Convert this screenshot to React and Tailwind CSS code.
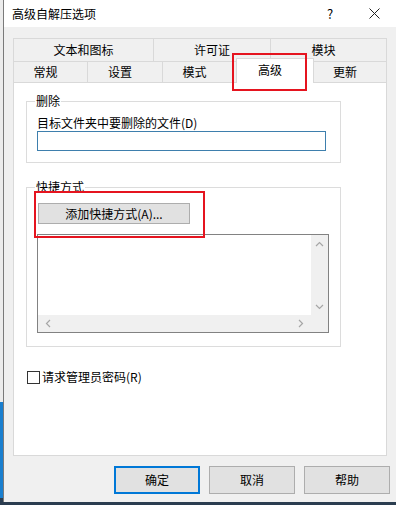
import React from "react";

function Chevron({ dir }) {
  const paths = {
    up: "M1 5 L4.5 1.5 L8 5",
    down: "M1 2 L4.5 5.5 L8 2",
    left: "M5 1 L1.5 4.5 L5 8",
    right: "M2 1 L5.5 4.5 L2 8",
  };
  const horiz = dir === "left" || dir === "right";
  return (
    <svg width={horiz ? 7 : 9} height={horiz ? 9 : 7} viewBox={horiz ? "0 0 7 9" : "0 0 9 7"}>
      <path d={paths[dir]} fill="none" stroke="#a6a6a6" strokeWidth="1.2" />
    </svg>
  );
}

function Group({ label, className, children }) {
  return (
    <div className={"relative border border-[#dcdcdc] " + className}>
      <div className="absolute left-[8px] top-[-8px] bg-white px-[1px] leading-[14px]">{label}</div>
      {children}
    </div>
  );
}

export default function App() {
  return (
    <div className="relative w-[396px] h-[505px] flex flex-col overflow-hidden text-[12px] text-black font-['Noto_Sans_CJK_SC','Microsoft_YaHei',sans-serif]">
      <div className="flex flex-1 min-h-0">
        <div className="w-[3px] flex flex-col">
          <div className="h-[402px] bg-[#ececec]" />
          <div className="h-[96px] bg-[#1a7fcf]" />
          <div className="flex-1 bg-[#2b3d50]" />
        </div>
        <div className="flex-1 border-l border-[#7a7a7a] bg-[#f0f0f0] flex flex-col">
          {/* Title bar */}
          <div className="h-[27px] bg-white flex items-center">
            <div className="pl-[8px] leading-[14px]">高级自解压选项</div>
            <div className="ml-auto flex items-center h-full">
              <div className="w-[46px] text-center text-[13px] leading-[14px]">?</div>
              <div className="w-[43px] flex items-center justify-center">
                <svg width="11" height="11" viewBox="0 0 11 11">
                  <path d="M0.5 0.5 L10.5 10.5 M10.5 0.5 L0.5 10.5" stroke="#222" strokeWidth="1" fill="none" />
                </svg>
              </div>
            </div>
          </div>

          {/* Tabs */}
          <div className="ml-[9px] mt-[11px] w-[374px]">
            <div className="flex h-[23px]">
              <div className="w-[140px] border-t border-l border-[#d9d9d9] flex items-center justify-center leading-[14px]">文本和图标</div>
              <div className="w-[117px] border-t border-l border-[#d9d9d9] flex items-center justify-center leading-[14px]">许可证</div>
              <div className="w-[117px] border-t border-l border-r border-[#d9d9d9] flex items-center justify-center pr-[10px] leading-[14px]">模块</div>
            </div>
            <div className="flex h-[21px] items-start">
              <div className="w-[74px] h-[21px] border-t border-l border-[#d9d9d9] flex items-center justify-center pr-[10px] leading-[14px]">常规</div>
              <div className="w-[75px] h-[21px] border-t border-l border-[#d9d9d9] flex items-center justify-center pr-[10px] leading-[14px]">设置</div>
              <div className="w-[74px] h-[21px] border-t border-l border-[#d9d9d9] flex items-center justify-center pr-[10px] leading-[14px]">模式</div>
              <div className="relative z-10 w-[78px] h-[25px] mt-[-3px] bg-white border-t border-l border-r border-[#d9d9d9] flex items-center justify-center pr-[10px] pb-[2px] leading-[14px]">高级</div>
              <div className="w-[73px] h-[21px] border-t border-r border-[#d9d9d9] flex items-center justify-center pr-[10px] leading-[14px]">更新</div>
            </div>

            {/* Panel */}
            <div className="h-[374px] bg-white border border-[#d9d9d9] flex flex-col">
              <Group label="删除" className="ml-[12px] mt-[18px] w-[315px] h-[62px]">
                <div className="pl-[10px] pt-[14px] leading-[14px]">目标文件夹中要删除的文件(D)</div>
                <div className="ml-[10px] mt-[1px] w-[289px] h-[20px] border border-[#3e7fad] bg-white" />
              </Group>

              <Group label="快捷方式" className="ml-[12px] mt-[24px] w-[315px] h-[160px]">
                <div className="ml-[11px] mt-[15px] w-[152px] h-[21px] bg-[#e1e1e1] border border-[#adadad] flex items-center justify-center leading-[14px]">
                  添加快捷方式(A)...
                </div>
                <div className="ml-[10px] mt-[10px] w-[292px] h-[99px] border border-[#828282] flex flex-col">
                  <div className="flex flex-1 min-h-0">
                    <div className="flex-1 bg-white" />
                    <div className="w-[17px] bg-[#f0f0f0] flex flex-col items-center justify-between pt-[6px] pb-[5px]">
                      <Chevron dir="up" />
                      <Chevron dir="down" />
                    </div>
                  </div>
                  <div className="h-[17px] flex bg-[#f0f0f0]">
                    <div className="flex-1 flex items-center justify-between pl-[7px] pr-[7px]">
                      <Chevron dir="left" />
                      <Chevron dir="right" />
                    </div>
                    <div className="w-[17px]" />
                  </div>
                </div>
              </Group>

              <div className="ml-[13px] mt-[23px] flex items-center">
                <div className="w-[13px] h-[13px] border border-[#333333] bg-white" />
                <div className="ml-[2px] leading-[14px]">请求管理员密码(R)</div>
              </div>
            </div>
          </div>

          {/* Buttons */}
          <div className="mt-[10px] flex justify-end gap-[9px] pr-[6px]">
            <div className="w-[86px] h-[28px] bg-[#e1e1e1] border-2 border-[#0078d7] flex items-center justify-center leading-[14px]">确定</div>
            <div className="w-[86px] h-[28px] bg-[#e1e1e1] border border-[#adadad] flex items-center justify-center leading-[14px]">取消</div>
            <div className="w-[86px] h-[28px] bg-[#e1e1e1] border border-[#adadad] flex items-center justify-center leading-[14px]">帮助</div>
          </div>
        </div>
      </div>
      <div className="h-[3px] bg-[#2b3d50]" />

      {/* Red annotation boxes */}
      <div className="absolute left-[232px] top-[53px] w-[75px] h-[38px] border-2 border-[#e5141f] z-20 pointer-events-none" />
      <div className="absolute left-[34px] top-[191px] w-[171px] h-[47px] border-2 border-[#e5141f] z-20 pointer-events-none" />
    </div>
  );
}
